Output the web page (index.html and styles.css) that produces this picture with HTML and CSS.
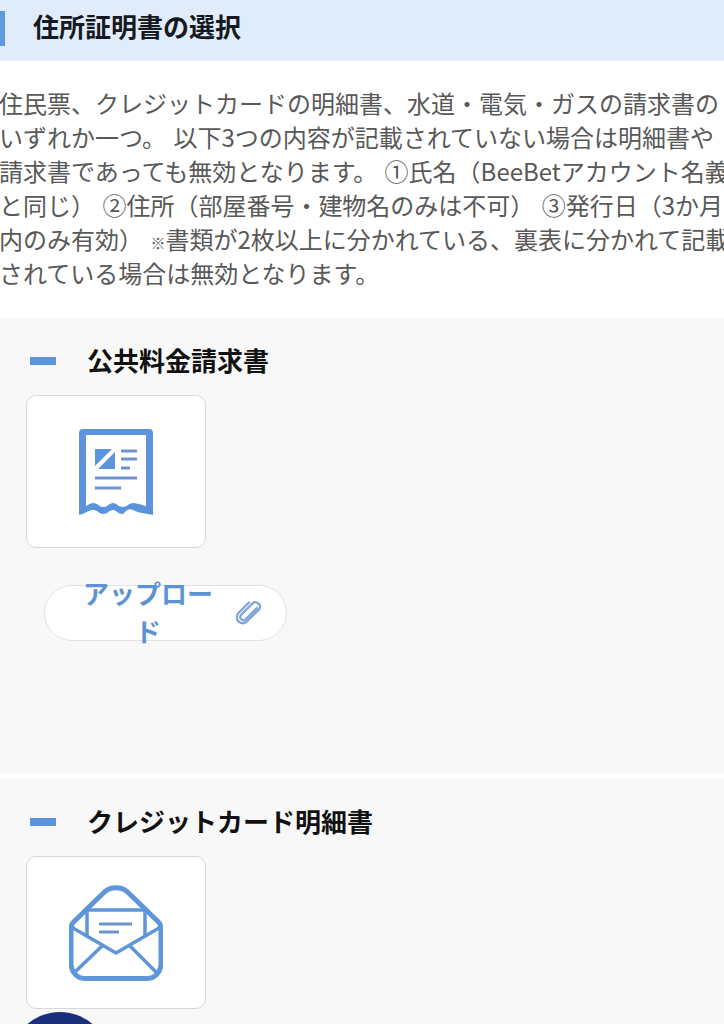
FILE: index.html
```html
<!DOCTYPE html>
<html lang="ja">
<head>
<meta charset="UTF-8" />
<meta name="viewport" content="width=device-width, initial-scale=1" />
<title>住所証明書の選択</title>
<link rel="stylesheet" href="styles.css">
</head>
<body>
  <header class="page-head">
    <h1>住所証明書の選択</h1>
  </header>

  <div class="intro">
    <p>住民票、クレジットカードの明細書、水道・電気・ガスの請求書の</p>
    <p>いずれか一つ。 以下3つの内容が記載されていない場合は明細書や</p>
    <p>請求書であっても無効となります。 ①氏名（BeeBetアカウント名義</p>
    <p>と同じ） ②住所（部屋番号・建物名のみは不可） ③発行日（3か月</p>
    <p>内のみ有効） <small>※</small>書類が2枚以上に分かれている、裏表に分かれて記載</p>
    <p>されている場合は無効となります。</p>
  </div>

  <section class="doc doc-first">
    <h2><span class="dash"></span>公共料金請求書</h2>
    <div class="doc-card">
      <svg class="icon-bill" viewBox="0 0 74 86" width="74" height="86">
        <path fill="#5b94dc" fill-rule="evenodd" d="M4 0H70a4 4 0 0 1 4 4V86C66 84 62 85 54 81 48 78 45 85 44 85 38 85 38 81 34 81 30 81 29 85 24 85 20 85 19 81 14 81 9 81 6 85 0 86V4a4 4 0 0 1 4-4ZM7 6V77C9 76.500 11 74 14 74 19 74 20 78 24 78 29 78 30 74 34 74 38 74 39 78 44 78 48 78 50 74 54 74 59 74 63 76.500 67 77V6Z"/>
        <path fill="#5b94dc" d="M16 20H33L16 37ZM36 23V40H19Z"/>
        <path stroke="#6f93cf" stroke-width="3" fill="none" d="M42 22H58M42 30H58M42 39H51M16 49H58M16 59H42"/>
      </svg>
    </div>
    <button class="upload" type="button">
      <span class="upload-label">アップロード</span>
      <svg class="clip" viewBox="0 0 26 26" width="26" height="26">
        <path fill="none" stroke="#7fa6d6" stroke-width="2.300" stroke-linecap="round" d="M21 8 9.500 19.500a3.200 3.200 0 0 1-4.500-4.500L17 3a4.500 4.500 0 0 1 6.200 6.200L11 21.500a6 6 0 0 1-8.500-8.500L13 2.500"/>
      </svg>
    </button>
  </section>

  <section class="doc doc-last">
    <h2><span class="dash"></span>クレジットカード明細書</h2>
    <div class="doc-card">
      <svg class="icon-mail" viewBox="0 0 94 96" width="94" height="96">
        <g fill="none" stroke="#5f96da" stroke-linejoin="round" stroke-linecap="round">
          <path stroke-width="5" d="M4.500 37 36 6.500C42 1.500 52 1.500 58 6.500L89.500 37C91.500 39 92 42 92 46V78C92 87 86 93.500 78 93.500H16C8 93.500 2 87 2 78V46C2 42 2.500 39 4.500 37Z"/>
          <path stroke-width="3.500" d="M4 43 47 68 90 43"/>
          <path stroke-width="3.500" d="M18 25H76V51M18 25V51"/>
          <path stroke-width="3.500" d="M33 61 6 87M61 61 87 87"/>
        </g>
        <path stroke="#6f93cf" stroke-width="3" d="M30 39H63M30 47H50"/>
      </svg>
    </div>
  </section>

  <div class="chat-bubble"></div>
</body>
</html>
```

FILE: styles.css
```css
html {
  overflow: hidden;
}
body {
  margin: 0;
  background: #fff;
  font-family: "Noto Sans CJK JP", "Noto Sans", sans-serif;
  color: #111;
  height: 1024px;
  overflow: hidden;
  position: relative;
  display: flex;
  flex-direction: column;
}
.page-head {
  height: 61px;
  flex: none;
  background: #e0ecfa;
  display: flex;
  align-items: center;
  padding-left: 33px;
  position: relative;
}
.page-head::before {
  content: "";
  position: absolute;
  left: 0;
  top: 11px;
  width: 5px;
  height: 35px;
  background: #5b9be0;
}
.page-head h1 {
  margin: 0 0 10px 0;
  font-size: 26px;
  line-height: 36px;
  font-weight: 700;
  color: #16191f;
}
.intro {
  flex: none;
  padding: 25px 0 28px 0;
  font-size: 24px;
  line-height: 34px;
  color: #585858;
  white-space: nowrap;
  overflow: hidden;
  text-indent: -1px;
  word-spacing: 2px;
}
.intro p {
  margin: 0;
}
.intro small {
  font-size: 15px;
  line-height: 0;
}
.doc {
  background: #f8f8f8;
  padding: 23px 0 0 26px;
}
.doc-first {
  flex: none;
  height: 432px;
  margin-bottom: 6px;
}
.doc-last {
  flex: 1;
  min-height: 0;
}
.doc h2 {
  margin: 0 0 17px 0;
  display: flex;
  align-items: center;
  font-size: 26px;
  line-height: 37px;
  font-weight: 700;
  color: #111;
}
.dash {
  width: 26px;
  height: 8px;
  margin: 2px 31px 0 4px;
  background: #5b94dc;
}
.doc-card {
  width: 178px;
  height: 151px;
  background: #fff;
  border: 1px solid #d8d8d8;
  border-radius: 10px;
  display: flex;
  align-items: center;
  justify-content: center;
}
.upload {
  margin: 37px 0 0 18px;
  width: 243px;
  height: 56px;
  padding: 0 24px 0 38px;
  background: #fff;
  border: 1.500px solid #e2e2e2;
  border-radius: 28px;
  display: flex;
  align-items: center;
  justify-content: space-between;
  font-family: inherit;
}
.upload-label {
  width: 130px;
  margin-top: -2px;
  font-size: 26px;
  line-height: 38px;
  font-weight: 700;
  color: #5c93d4;
  text-align: center;
  word-break: break-all;
}
.chat-bubble {
  position: absolute;
  left: 10px;
  top: 1012px;
  width: 100px;
  height: 100px;
  border-radius: 50%;
  background: #1b2f7d;
}
```
